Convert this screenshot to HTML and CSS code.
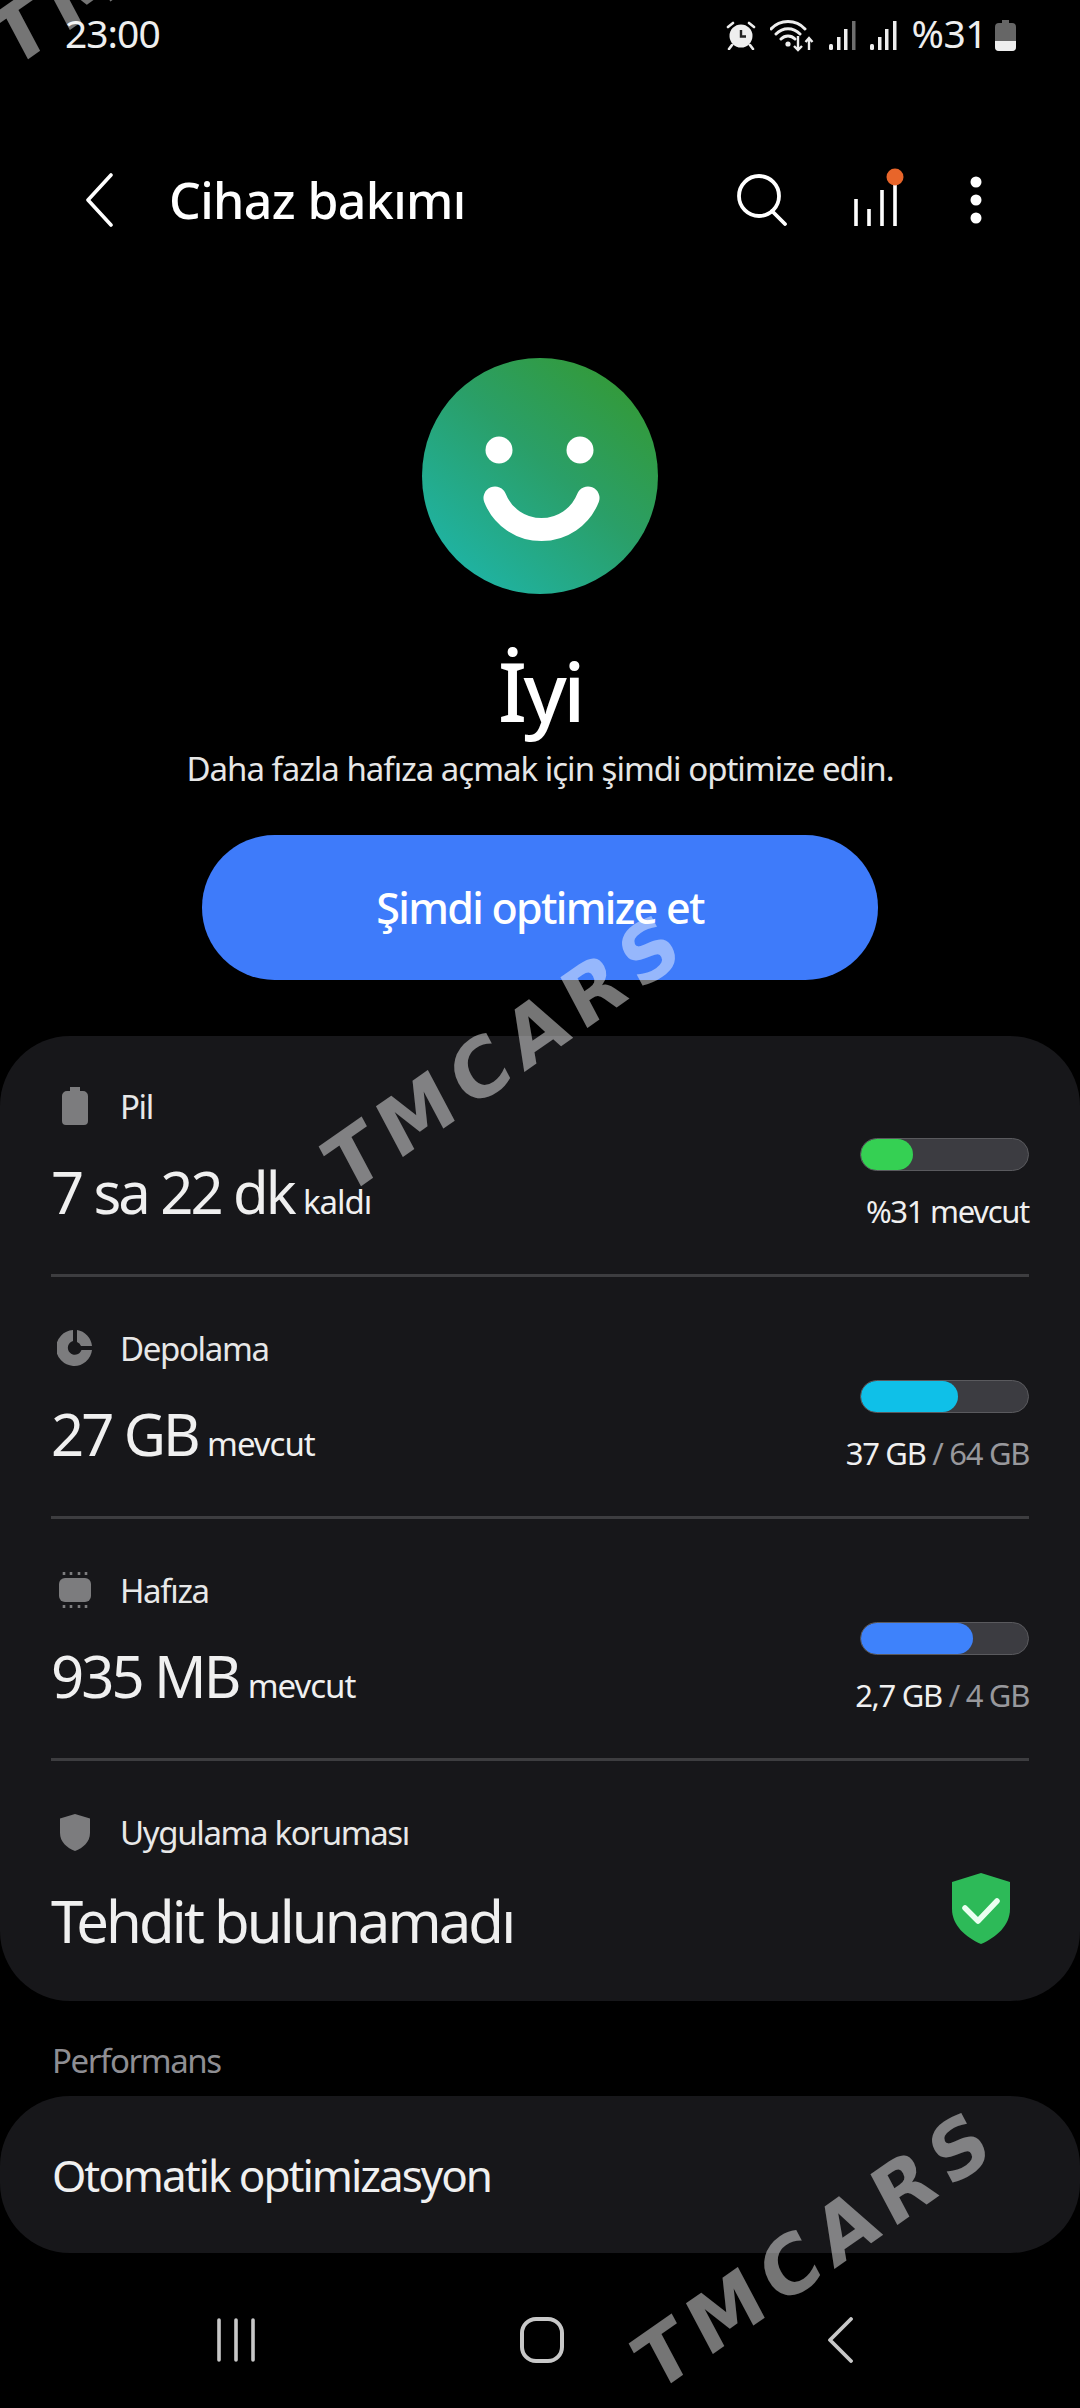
FILE: index.html
```html
<!DOCTYPE html>
<html lang="tr">
<head>
  <meta charset="UTF-8" />
  <meta name="viewport" content="width=device-width, initial-scale=1.0"/>
  <title>Cihaz bakımı</title>
  <link rel="stylesheet" href="styles.css">
</head>
<body>
  <div class="status">
    <span class="clock">23:00</span>
    <div class="status-right">
      <svg class="st-alarm" width="30" height="30" viewBox="0 0 30 30">
        <circle cx="15" cy="16" r="11.5" fill="#eee"/>
        <path d="M15 10v6.5h5" fill="none" stroke="#222" stroke-width="2.4"/>
        <path d="M2 7l5-4M28 7l-5-4M6 25l-3 4M24 25l3 4" stroke="#eee" stroke-width="2.6" fill="none" stroke-linecap="round"/>
      </svg>
      <svg class="st-wifi" width="44" height="34" viewBox="0 0 44 34">
        <path d="M1 11C10 1 26 1 35 11M6 16C13 9 23 9 30 16M11 21C15 17 21 17 25 21" fill="none" stroke="#eee" stroke-width="3" stroke-linecap="round"/>
        <circle cx="18" cy="26" r="2.6" fill="#eee"/>
        <path d="M28 18v14M24 28l4 4 4-4M39 32V20M35.500 24l3.500-4 3.500 4" fill="none" stroke="#eee" stroke-width="2.4"/>
      </svg>
      <svg class="st-signal" width="28" height="30" viewBox="0 0 28 30">
        <rect x="0" y="24" width="4" height="6" rx="1.500" fill="#eee"/>
        <rect x="8" y="17" width="3.500" height="13" fill="#eee"/>
        <rect x="15" y="9" width="3.500" height="21" fill="#eee"/>
        <rect x="23" y="1" width="3.500" height="29" fill="#6e6e6e"/>
      </svg>
      <svg class="st-signal" width="28" height="30" viewBox="0 0 28 30">
        <rect x="0" y="24" width="4" height="6" rx="1.500" fill="#eee"/>
        <rect x="8" y="17" width="3.500" height="13" fill="#eee"/>
        <rect x="15" y="9" width="3.500" height="21" fill="#eee"/>
        <rect x="23" y="1" width="3.500" height="29" fill="#eee"/>
      </svg>
      <span class="st-percent">%31</span>
      <svg class="st-battery" width="21" height="31" viewBox="0 0 21 31">
        <path d="M7 0h7v3h3a4 4 0 0 1 4 4v20a4 4 0 0 1-4 4H4a4 4 0 0 1-4-4V7a4 4 0 0 1 4-4h3z" fill="#666"/>
        <path d="M0 21h21v6a4 4 0 0 1-4 4H4a4 4 0 0 1-4-4z" fill="#eee"/>
      </svg>
    </div>
  </div>

  <div class="appbar">
    <svg class="back" width="28" height="54" viewBox="0 0 28 54">
      <path d="M26 2L3 27l23 25" fill="none" stroke="#fff" stroke-width="3.600" stroke-linecap="round" stroke-linejoin="round"/>
    </svg>
    <div class="title">Cihaz bakımı</div>
    <svg class="search" width="52" height="52" viewBox="0 0 52 52">
      <circle cx="23" cy="22" r="20" fill="none" stroke="#fff" stroke-width="3.800"/>
      <path d="M36 37l13 13" fill="none" stroke="#fff" stroke-width="3.800" stroke-linecap="round"/>
    </svg>
    <svg class="bars" width="54" height="60" viewBox="0 0 54 60">
      <path d="M5 59V32M18 59V42M31 59V23M44 59V10" fill="none" stroke="#fff" stroke-width="3.600"/>
      <circle cx="44" cy="10" r="8.500" fill="#e8652a"/>
    </svg>
    <svg class="dots" width="12" height="50" viewBox="0 0 12 50">
      <circle cx="6" cy="7" r="5.500" fill="#fff"/>
      <circle cx="6" cy="25" r="5.500" fill="#fff"/>
      <circle cx="6" cy="43" r="5.500" fill="#fff"/>
    </svg>
  </div>

  <div class="hero">
    <svg class="face" width="236" height="236" viewBox="0 0 236 236">
      <defs>
        <linearGradient id="faceGrad" x1="0.150" y1="0.900" x2="0.850" y2="0.100">
          <stop offset="0" stop-color="#1fb3a3"/>
          <stop offset="0.550" stop-color="#2a9f68"/>
          <stop offset="1" stop-color="#339a3a"/>
        </linearGradient>
      </defs>
      <circle cx="118" cy="118" r="118" fill="url(#faceGrad)"/>
      <circle cx="77" cy="92" r="13.500" fill="#fff"/>
      <circle cx="158" cy="92" r="13.500" fill="#fff"/>
      <path d="M73 140A50 50 0 0 0 166 140" fill="none" stroke="#fff" stroke-width="23" stroke-linecap="round"/>
    </svg>
    <div class="state">İyi</div>
    <div class="hint">Daha fazla hafıza açmak için şimdi optimize edin.</div>
    <div class="optimize">Şimdi optimize et</div>
  </div>

  <div class="card">
    <div class="row">
      <div class="row-left">
        <div class="label">
          <svg class="label-icon" width="36" height="40" viewBox="0 0 36 40">
            <path d="M13 1h10v4h3a5 5 0 0 1 5 5v25a4 4 0 0 1-4 4H9a4 4 0 0 1-4-4V10a5 5 0 0 1 5-5h3z" fill="#7c7c7e"/>
          </svg>
          <span>Pil</span>
        </div>
        <div class="value">7 sa 22 dk <small>kaldı</small></div>
      </div>
      <div class="row-right">
        <div class="meter"><div class="meter-fill fill-green"></div></div>
        <div class="meter-text">%31 mevcut</div>
      </div>
    </div>

    <div class="row">
      <div class="row-left">
        <div class="label">
          <svg class="label-icon" width="36" height="38" viewBox="0 0 36 38">
            <path d="M16 1v11a7 7 0 1 0 8.500 9H35A18 18 0 1 1 16 1z" fill="#7c7c7e"/>
            <path d="M20 1a18 18 0 0 1 15 16H24a7 7 0 0 0-4-4z" fill="#7c7c7e"/>
          </svg>
          <span>Depolama</span>
        </div>
        <div class="value">27 GB <small>mevcut</small></div>
      </div>
      <div class="row-right">
        <div class="meter"><div class="meter-fill fill-cyan"></div></div>
        <div class="meter-text">37 GB <span class="dim">/ 64 GB</span></div>
      </div>
    </div>

    <div class="row">
      <div class="row-left">
        <div class="label">
          <svg class="label-icon" width="36" height="38" viewBox="0 0 36 38">
            <rect x="2" y="7" width="32" height="24" rx="6" fill="#7c7c7e"/>
            <path d="M7 1v3M14 1v3M22 1v3M29 1v3M7 34v3M14 34v3M22 34v3M29 34v3" stroke="#7c7c7e" stroke-width="2.600"/>
          </svg>
          <span>Hafıza</span>
        </div>
        <div class="value">935 MB <small>mevcut</small></div>
      </div>
      <div class="row-right">
        <div class="meter"><div class="meter-fill fill-blue"></div></div>
        <div class="meter-text">2,7 GB <span class="dim">/ 4 GB</span></div>
      </div>
    </div>

    <div class="row row-last">
      <div class="row-left">
        <div class="label">
          <svg class="label-icon" width="36" height="38" viewBox="0 0 36 38">
            <path d="M18 1l15 4.500V20c0 9-7 15-15 18C10 35 3 29 3 20V5.500z" fill="#7c7c7e"/>
          </svg>
          <span>Uygulama koruması</span>
        </div>
        <div class="value value-threat">Tehdit bulunamadı</div>
      </div>
      <svg class="safe" width="58" height="71" viewBox="0 0 58 71">
        <path d="M29 0l29 9v27c0 16-13 28-29 35C13 64 0 52 0 36V9z" fill="#2dba58"/>
        <path d="M13 35l13 13 19-20" fill="none" stroke="#eafff0" stroke-width="5.500" stroke-linecap="round" stroke-linejoin="round"/>
      </svg>
    </div>
  </div>

  <div class="section-title">Performans</div>
  <div class="card card-auto">Otomatik optimizasyon</div>

  <div class="navbar">
    <svg width="40" height="44" viewBox="0 0 40 44">
      <path d="M3 2v40M20 2v40M37 2v40" stroke="#c8c8c8" stroke-width="3.600" stroke-linecap="round"/>
    </svg>
    <svg width="44" height="46" viewBox="0 0 44 46">
      <rect x="2" y="2" width="40" height="42" rx="14" fill="none" stroke="#c8c8c8" stroke-width="4"/>
    </svg>
    <svg width="26" height="46" viewBox="0 0 26 46">
      <path d="M24 2L3 23l21 21" fill="none" stroke="#c8c8c8" stroke-width="3.800" stroke-linecap="round" stroke-linejoin="round"/>
    </svg>
  </div>

  <div class="mark mark-top">TMCARS</div>
  <div class="mark mark-mid">TMCARS</div>
  <div class="mark mark-low">TMCARS</div>
</body>
</html>
```

FILE: styles.css
```css
* {
  box-sizing: border-box;
}

body {
  margin: 0;
  width: 1080px;
  height: 2408px;
  overflow: hidden;
  position: relative;
  background-color: #000;
  color: #f0f0f0;
  font-family: "Noto Sans", Roboto, sans-serif;
}

svg {
  display: block;
  flex-shrink: 0;
}

/* status bar */
.status {
  height: 70px;
  padding: 0 64px 0 65px;
  display: flex;
  align-items: center;
  justify-content: space-between;
}

.clock {
  font-size: 39px;
  letter-spacing: -1px;
  color: #eee;
  margin-bottom: 6px;
}

.status-right {
  display: flex;
  align-items: center;
}

.st-alarm {
  margin-right: 14px;
}

.st-wifi {
  margin-right: 15px;
}

.st-signal {
  margin-right: 13px;
}

.st-percent {
  font-size: 39px;
  letter-spacing: -0.5px;
  color: #eee;
  margin-right: 8px;
  margin-bottom: 6px;
}

/* app bar */
.appbar {
  height: 110px;
  margin-top: 75px;
  padding-left: 85px;
  display: flex;
  align-items: center;
}

.title {
  margin-left: 56px;
  width: 567px;
  font-size: 50px;
  font-weight: 500;
  letter-spacing: -0.6px;
  color: #fff;
}

.bars {
  margin-left: 63px;
  margin-top: -6px;
}

.dots {
  margin-left: 65px;
}

/* smiley + button */
.hero {
  margin-top: 103px;
  display: flex;
  flex-direction: column;
  align-items: center;
}

.state {
  margin-top: 41px;
  height: 110px;
  line-height: 110px;
  font-size: 82px;
  font-weight: 500;
  letter-spacing: -3.5px;
  color: #fff;
}

.hint {
  margin-top: 1px;
  font-size: 33px;
  line-height: 46px;
  letter-spacing: -1px;
  color: #e6e6e6;
}

.optimize {
  margin-top: 43px;
  width: 676px;
  height: 145px;
  border-radius: 73px;
  background-color: #3e7bfa;
  color: #fff;
  font-size: 43px;
  font-weight: 500;
  letter-spacing: -1.7px;
  display: flex;
  align-items: center;
  justify-content: center;
}

/* cards */
.card {
  margin-top: 56px;
  height: 965px;
  border-radius: 70px;
  background-color: #17171a;
  padding: 0 51px;
}

.row {
  height: 241px;
  margin-bottom: 1px;
  border-bottom: 3px solid #3d3d40;
  display: flex;
  justify-content: space-between;
}

.row-last {
  border-bottom: none;
  align-items: flex-start;
}

.row-left {
  padding-top: 46px;
}

.label {
  height: 48px;
  display: flex;
  align-items: center;
  gap: 27px;
  padding-left: 6px;
  font-size: 33px;
  letter-spacing: -1.35px;
  color: #e8e8e8;
}

.value {
  margin-top: 24px;
  font-size: 58px;
  line-height: 76px;
  letter-spacing: -2.9px;
  color: #f0f0f0;
}

.value small {
  font-size: 33px;
  letter-spacing: -1px;
  margin-left: -3px;
}

.value-threat {
  margin-top: 27px;
}

.row-right {
  padding-top: 102px;
  display: flex;
  flex-direction: column;
  align-items: flex-end;
}

.meter {
  width: 169px;
  height: 33px;
  border-radius: 17px;
  background-color: #3c3c41;
  border: 1px solid #5a5a5e;
  overflow: hidden;
}

.meter-fill {
  height: 100%;
  border-radius: 17px;
}

.fill-green {
  width: 31%;
  background-color: #35d053;
}

.fill-cyan {
  width: 58%;
  background-color: #0fc0e8;
}

.fill-blue {
  width: 67%;
  background-color: #3e82fb;
}

.meter-text {
  margin-top: 20px;
  font-size: 31px;
  line-height: 40px;
  letter-spacing: -1.3px;
  color: #f0f0f0;
}

.dim {
  color: #98989c;
}

.safe {
  margin-top: 111px;
  margin-right: 19px;
}

.section-title {
  margin-top: 40px;
  padding-left: 52px;
  font-size: 33px;
  line-height: 40px;
  letter-spacing: -1.4px;
  color: #8e8e93;
}

.card-auto {
  margin-top: 15px;
  height: 157px;
  padding-left: 52px;
  font-size: 44px;
  letter-spacing: -2px;
  color: #f0f0f0;
  display: flex;
  align-items: center;
}

.navbar {
  margin-top: 64px;
  padding: 0 227px 0 216px;
  display: flex;
  align-items: center;
  justify-content: space-between;
}

/* watermarks lie over the whole page */
.mark {
  position: absolute;
  font-family: "DejaVu Sans", sans-serif;
  font-weight: 700;
  font-size: 78px;
  color: rgba(255, 255, 255, 0.46);
  transform: rotate(-35deg) skewX(-7deg);
  transform-origin: left bottom;
  white-space: nowrap;
  letter-spacing: 10px;
  line-height: 1;
}

.mark-mid {
  left: 351px;
  top: 1130px;
}

.mark-low {
  left: 661px;
  top: 2327px;
}

.mark-top {
  left: 18px;
  top: 3px;
}
```
